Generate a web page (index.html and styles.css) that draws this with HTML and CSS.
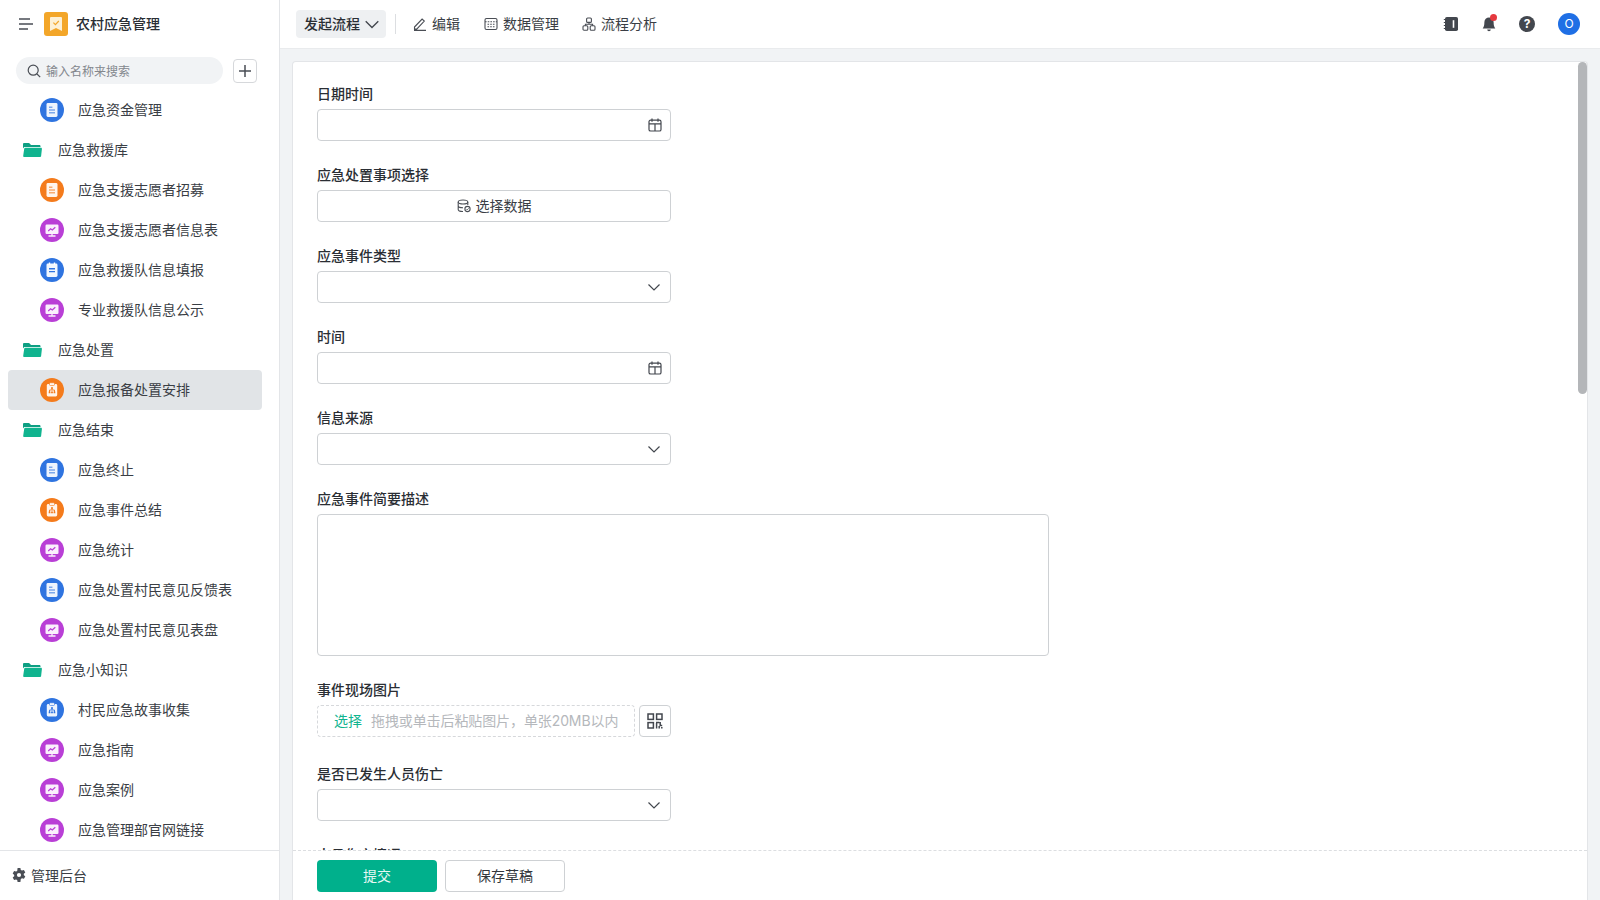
FILE: index.html
```html
<!DOCTYPE html>
<html lang="zh-CN">
<head>
    <meta charset="UTF-8">
    <meta name="viewport" content="width=device-width, initial-scale=1.0">
    <title>应急报备处置安排</title>
    <link rel="stylesheet" href="styles.css">
</head>
<body>
    <!-- Shared icons -->
    <svg class="icon-defs" aria-hidden="true">
        <symbol id="i-doc" viewBox="0 0 24 24">
            <circle cx="12" cy="12" r="12" fill="currentColor"/>
            <rect x="6.5" y="5" width="11" height="14" rx="1.4" fill="#fff" fill-opacity=".92"/>
            <path d="M9 9.2h3.4M9 12h6M9 14.8h6" stroke="currentColor" stroke-opacity=".6" stroke-width="1.4"/>
        </symbol>
        <symbol id="i-clip" viewBox="0 0 24 24">
            <circle cx="12" cy="12" r="12" fill="currentColor"/>
            <rect x="6.5" y="5.5" width="11" height="13.5" rx="1.4" fill="#fff" fill-opacity=".94"/>
            <path d="M9.5 4.5v2.4M14.5 4.5v2.4" stroke="#fff" stroke-width="1.4"/>
            <path d="M9 10.8h6M9 13.6h6" stroke="currentColor" stroke-width="1.4"/>
        </symbol>
        <symbol id="i-screen" viewBox="0 0 24 24">
            <circle cx="12" cy="12" r="12" fill="currentColor"/>
            <rect x="5.5" y="6.5" width="13" height="9.5" rx="1.2" fill="#fff" fill-opacity=".92"/>
            <path d="M8.2 13l2.4-2.2 1.7 1.2 3-2.8" fill="none" stroke="currentColor" stroke-width="1.2"/>
            <path d="M12 16v1.5M8.5 18h7" stroke="#fff" stroke-opacity=".92" stroke-width="1.3"/>
        </symbol>
        <symbol id="i-org" viewBox="0 0 24 24">
            <circle cx="12" cy="12" r="12" fill="currentColor"/>
            <rect x="6.8" y="6" width="10.4" height="12.5" rx="1.4" fill="#fff" fill-opacity=".92"/>
            <rect x="9.5" y="4.8" width="5" height="2.6" rx=".8" fill="#fff" stroke="currentColor" stroke-width=".7"/>
            <path d="M12 10v2M9.5 14v-2h5v2" fill="none" stroke="currentColor" stroke-width=".9"/>
            <path d="M11 9.2h2v1.6h-2zM8.7 13.6h1.7v1.6H8.7zM11.1 13.6h1.8v1.6h-1.8zM13.6 13.6h1.7v1.6h-1.7z" fill="currentColor"/>
        </symbol>
        <symbol id="i-folder" viewBox="0 0 20 16">
            <path d="M1 6.5V2.2C1 1.5 1.5 1 2.2 1h4.5c.4 0 .8.2 1 .5L9 3h8.2c.8 0 1.3.5 1.3 1.2V5H3.4C2 5 1.4 5.6 1 6.5z" fill="#0d9f83"/>
            <path d="M3.4 5.8h15.5c.6 0 1.1.5 1 1.1l-.8 7.3c-.1.5-.5.8-1 .8H2.3c-.7 0-1.2-.6-1.1-1.3l1-6.9c.1-.6.6-1 1.2-1z" fill="#10b48f"/>
        </symbol>
        <symbol id="i-chevron" viewBox="0 0 14 14">
            <path d="M1.5 4.5L7 10L12.5 4.5" fill="none" stroke="currentColor" stroke-width="1.2"/>
        </symbol>
        <symbol id="i-calendar" viewBox="0 0 14 14">
            <rect x="1" y="2.2" width="12" height="10.8" rx="1.6" fill="none" stroke="currentColor" stroke-width="1.2"/>
            <path d="M1 5.8h12M7 5.8V13M4 .6v3.2M10 .6v3.2" fill="none" stroke="currentColor" stroke-width="1.2"/>
        </symbol>
    </svg>

    <div class="app">
        <aside class="sidebar">
            <div class="brand">
                <svg class="brand-menu" width="14" height="12" viewBox="0 0 14 12"><path d="M0 1h11M0 6h14M0 11h9" stroke="#4a4e55" stroke-width="1.5"/></svg>
                <div class="brand-logo">
                    <svg width="12" height="14" viewBox="0 0 12 14"><path d="M0 1a1 1 0 0 1 1-1h10a1 1 0 0 1 1 1v13l-6-3-6 3z" fill="#fdf0d5"/><path d="M3.4 5.6L5.4 7.6L8.8 4" fill="none" stroke="#f3a629" stroke-width="1.2"/></svg>
                </div>
                <span class="brand-name">农村应急管理</span>
            </div>

            <div class="search-row">
                <div class="search-box">
                    <svg width="14" height="14" viewBox="0 0 14 14"><circle cx="6.2" cy="6.2" r="5" fill="none" stroke="#4a4e55" stroke-width="1.2"/><path d="M10 10l3.2 3.2" stroke="#4a4e55" stroke-width="1.2"/></svg>
                    <span>输入名称来搜索</span>
                </div>
                <button class="add-btn">
                    <svg width="14" height="14" viewBox="0 0 14 14"><path d="M7 1v12M1 7h12" stroke="#4a4e55" stroke-width="1.5"/></svg>
                </button>
            </div>

            <nav class="nav-list">
                <a class="nav-row nav-page"><svg class="nav-icon c-blue"><use href="#i-doc"/></svg>应急资金管理</a>
                <a class="nav-row nav-group"><svg class="folder-icon"><use href="#i-folder"/></svg>应急救援库</a>
                <a class="nav-row nav-page"><svg class="nav-icon c-orange"><use href="#i-doc"/></svg>应急支援志愿者招募</a>
                <a class="nav-row nav-page"><svg class="nav-icon c-purple"><use href="#i-screen"/></svg>应急支援志愿者信息表</a>
                <a class="nav-row nav-page"><svg class="nav-icon c-blue"><use href="#i-clip"/></svg>应急救援队信息填报</a>
                <a class="nav-row nav-page"><svg class="nav-icon c-purple"><use href="#i-screen"/></svg>专业救援队信息公示</a>
                <a class="nav-row nav-group"><svg class="folder-icon"><use href="#i-folder"/></svg>应急处置</a>
                <a class="nav-row nav-page active"><svg class="nav-icon c-orange"><use href="#i-org"/></svg>应急报备处置安排</a>
                <a class="nav-row nav-group"><svg class="folder-icon"><use href="#i-folder"/></svg>应急结束</a>
                <a class="nav-row nav-page"><svg class="nav-icon c-blue"><use href="#i-doc"/></svg>应急终止</a>
                <a class="nav-row nav-page"><svg class="nav-icon c-orange"><use href="#i-org"/></svg>应急事件总结</a>
                <a class="nav-row nav-page"><svg class="nav-icon c-purple"><use href="#i-screen"/></svg>应急统计</a>
                <a class="nav-row nav-page"><svg class="nav-icon c-blue"><use href="#i-doc"/></svg>应急处置村民意见反馈表</a>
                <a class="nav-row nav-page"><svg class="nav-icon c-purple"><use href="#i-screen"/></svg>应急处置村民意见表盘</a>
                <a class="nav-row nav-group"><svg class="folder-icon"><use href="#i-folder"/></svg>应急小知识</a>
                <a class="nav-row nav-page"><svg class="nav-icon c-blue"><use href="#i-org"/></svg>村民应急故事收集</a>
                <a class="nav-row nav-page"><svg class="nav-icon c-purple"><use href="#i-screen"/></svg>应急指南</a>
                <a class="nav-row nav-page"><svg class="nav-icon c-purple"><use href="#i-screen"/></svg>应急案例</a>
                <a class="nav-row nav-page"><svg class="nav-icon c-purple"><use href="#i-screen"/></svg>应急管理部官网链接</a>
            </nav>

            <div class="sidebar-foot">
                <svg width="14" height="14" viewBox="0 0 14 14"><path fill-rule="evenodd" d="M5.6 0h2.8l.4 1.9 1.2.7 1.9-.6 1.4 2.4-1.5 1.3v1.4l1.5 1.3-1.4 2.4-1.9-.6-1.2.7L8.4 14H5.6l-.4-1.9-1.2-.7-1.9.6L.7 9.6l1.5-1.3V6.9L.7 5.6 2.100 3l1.900.6 1.200-.7zM7 4.900a2.100 2.100 0 1 0 0 4.200 2.100 2.100 0 0 0 0-4.200z" fill="#4a4e55"/></svg>
                <span>管理后台</span>
            </div>
        </aside>

        <main class="main">
            <header class="topbar">
                <button class="start-btn">发起流程<svg class="chevron start-chevron"><use href="#i-chevron"/></svg></button>
                <span class="top-divider"></span>
                <a class="top-link">
                    <svg width="14" height="14" viewBox="0 0 14 14"><path d="M1.5 10l7.6-8 2.200 2.100-7.600 8H1.500zM1 13.400h12" fill="none" stroke="#4a4e55" stroke-width="1.1"/></svg>编辑
                </a>
                <a class="top-link">
                    <svg width="14" height="14" viewBox="0 0 14 14"><rect x="1" y="1.5" width="12" height="11" rx="1.5" fill="none" stroke="#4a4e55" stroke-width="1.1"/><path d="M1 4.8h12M3.5 7.2h7M3.5 9.8h7" fill="none" stroke="#4a4e55" stroke-width="1.1" stroke-dasharray="1.6 1.1"/></svg>数据管理
                </a>
                <a class="top-link flow-link">
                    <svg width="14" height="14" viewBox="0 0 14 14"><rect x="4.6" y="1" width="4.8" height="4.4" rx="1" fill="none" stroke="#4a4e55" stroke-width="1.1"/><rect x="1" y="8.8" width="4.8" height="4.4" rx="1" fill="none" stroke="#4a4e55" stroke-width="1.1"/><rect x="8.2" y="8.8" width="4.8" height="4.4" rx="1" fill="none" stroke="#4a4e55" stroke-width="1.1"/><path d="M7 5.4v1.800M3.400 8.800V7.200h7.200v1.600" fill="none" stroke="#4a4e55" stroke-width="1.1"/></svg>流程分析
                </a>
                <div class="top-actions">
                    <svg width="16" height="16" viewBox="0 0 16 16"><rect x="2" y="1" width="13" height="14" rx="1.8" fill="#43474e"/><path d="M.8 3.500h2.200M.8 6.500h2.200M.8 9.500h2.200M.8 12.500h2.200" stroke="#43474e" stroke-width="1.2"/><path d="M10.500 4.200v7.600" stroke="#fff" stroke-width="1.6"/></svg>
                    <span class="bell">
                        <svg width="16" height="16" viewBox="0 0 16 16"><path d="M8 1.500a4.600 4.600 0 0 1 4.600 4.600c0 3.600.6 5 1.700 6.400H1.700c1.100-1.400 1.700-2.800 1.700-6.400A4.600 4.600 0 0 1 8 1.500zM6.200 13.500h3.600a1.800 1.800 0 0 1-3.600 0z" fill="#43474e"/></svg>
                        <i class="bell-dot"></i>
                    </span>
                    <span class="help">?</span>
                    <span class="avatar">O</span>
                </div>
            </header>

            <section class="card">
                <div class="form-body">
                    <div class="field">
                        <label>日期时间</label>
                        <div class="input"><svg class="cal"><use href="#i-calendar"/></svg></div>
                    </div>
                    <div class="field">
                        <label>应急处置事项选择</label>
                        <button class="input pick-btn">
                            <svg width="14" height="14" viewBox="0 0 14 14"><ellipse cx="6" cy="3" rx="4.8" ry="2" fill="none" stroke="#4a4e55" stroke-width="1.1"/><path d="M1.2 3v7.500c0 1.100 2.100 2 4.800 2M1.200 6.800c0 1.100 2.100 2 4.800 2M10.800 3v3" fill="none" stroke="#4a4e55" stroke-width="1.1"/><circle cx="10.5" cy="10" r="2.6" fill="none" stroke="#4a4e55" stroke-width="1.1"/><path d="M9.400 10l.8.8 1.400-1.400" fill="none" stroke="#4a4e55" stroke-width=".9"/></svg>
                            选择数据
                        </button>
                    </div>
                    <div class="field">
                        <label>应急事件类型</label>
                        <div class="input"><svg class="chevron"><use href="#i-chevron"/></svg></div>
                    </div>
                    <div class="field">
                        <label>时间</label>
                        <div class="input"><svg class="cal"><use href="#i-calendar"/></svg></div>
                    </div>
                    <div class="field">
                        <label>信息来源</label>
                        <div class="input"><svg class="chevron"><use href="#i-chevron"/></svg></div>
                    </div>
                    <div class="field">
                        <label>应急事件简要描述</label>
                        <div class="textarea"></div>
                    </div>
                    <div class="field field-upload">
                        <label>事件现场图片</label>
                        <div class="upload-row">
                            <div class="upload-box"><span class="upload-pick">选择</span><span class="upload-hint">拖拽或单击后粘贴图片，单张20MB以内</span></div>
                            <button class="qr-btn">
                                <svg width="16" height="16" viewBox="0 0 16 16" fill="none" stroke="#43474e" stroke-width="1.5"><rect x="1" y="1" width="5.4" height="5.4"/><rect x="9.6" y="1" width="5.4" height="5.4"/><rect x="1" y="9.6" width="5.4" height="5.4"/><path d="M9 9.600h3.400M13.200 9v3.400h2M9.600 10v5.400M12.200 13v2.400M14.800 14v1.400"/></svg>
                            </button>
                        </div>
                    </div>
                    <div class="field">
                        <label>是否已发生人员伤亡</label>
                        <div class="input"><svg class="chevron"><use href="#i-chevron"/></svg></div>
                    </div>
                    <div class="field">
                        <label>人员伤亡情况</label>
                        <div class="input"></div>
                    </div>
                </div>
                <div class="form-foot">
                    <button class="submit-btn">提交</button>
                    <button class="draft-btn">保存草稿</button>
                </div>
                <div class="scroll-thumb"></div>
            </section>
        </main>
    </div>
</body>
</html>
```

FILE: styles.css
```css
* {
    box-sizing: border-box;
}
html, body {
    height: 100%;
}
body {
    margin: 0;
    overflow: hidden;
    font-family: Inter, "Noto Sans CJK SC", sans-serif;
    font-size: 14px;
    color: #33373d;
    background-color: #fff;
}
button {
    font: inherit;
    color: inherit;
    cursor: pointer;
}
.icon-defs {
    position: absolute;
    width: 0;
    height: 0;
}
.app {
    display: flex;
    height: 900px;
}

/* Sidebar */
.sidebar {
    width: 280px;
    flex-shrink: 0;
    display: flex;
    flex-direction: column;
    border-right: 1px solid #e3e5e8;
}
.brand {
    height: 48px;
    display: flex;
    align-items: center;
    padding-left: 19px;
}
.brand-menu {
    margin-right: 11px;
}
.brand-logo {
    width: 24px;
    height: 24px;
    border-radius: 3px;
    background-color: #f3a629;
    display: flex;
    align-items: center;
    justify-content: center;
    margin-right: 8px;
}
.brand-name {
    font-weight: 500;
    color: #2a2e34;
    padding-bottom: 2px;
}
.search-row {
    display: flex;
    align-items: center;
    padding: 3px 0 0 16px;
    height: 42px;
}
.search-box {
    width: 207px;
    height: 27px;
    border-radius: 14px;
    background-color: #f1f3f5;
    display: flex;
    align-items: center;
    gap: 5px;
    padding-left: 11px;
    font-size: 12px;
    color: #83878d;
}
.add-btn {
    width: 24px;
    height: 24px;
    margin-left: 10px;
    padding: 0;
    display: flex;
    align-items: center;
    justify-content: center;
    background-color: #fff;
    border: 1px solid #d6d8db;
    border-radius: 4px;
}
.nav-list {
    flex: 1;
    overflow: hidden;
}
.nav-row {
    height: 40px;
    margin: 0 17px 0 8px;
    padding-bottom: 2px;
    display: flex;
    align-items: center;
    border-radius: 4px;
    color: #3a3e45;
}
.nav-page {
    padding-left: 32px;
}
.nav-group {
    padding-left: 14px;
}
.nav-row.active {
    background-color: #e1e4e7;
}
.nav-icon {
    width: 24px;
    height: 24px;
    margin: 2px 14px 0 0;
}
.folder-icon {
    width: 20px;
    height: 16px;
    margin: 2px 16px 0 0;
}
.c-blue {
    color: #2f74e0;
}
.c-orange {
    color: #f47b1c;
}
.c-purple {
    color: #b93fd6;
}
.sidebar-foot {
    height: 50px;
    border-top: 1px solid #e3e5e8;
    display: flex;
    align-items: center;
    gap: 5px;
    padding: 0 0 1px 12px;
    color: #3a3e45;
}

/* Main area */
.main {
    flex: 1;
    display: flex;
    flex-direction: column;
    background-color: #f1f3f5;
    min-width: 0;
}
.topbar {
    height: 49px;
    flex-shrink: 0;
    background-color: #fff;
    border-bottom: 1px solid #e9ebed;
    display: flex;
    align-items: center;
    padding: 0 20px 1px 16px;
}
.start-btn {
    height: 28px;
    width: 90px;
    border: none;
    border-radius: 4px;
    background-color: #eef0f2;
    display: flex;
    align-items: center;
    gap: 4px;
    padding: 0 0 2px 8px;
    font-weight: 500;
    color: #2a2e34;
}
.chevron {
    width: 14px;
    height: 14px;
    color: #43474e;
}
.start-chevron {
    width: 16px;
    height: 16px;
    margin-top: 2px;
}
.top-divider {
    width: 1px;
    height: 20px;
    background-color: #dcdee1;
    margin: 0 17px 0 9px;
}
.top-link {
    display: flex;
    align-items: center;
    gap: 5px;
    margin-right: 24px;
    padding-bottom: 2px;
    color: #3a3e45;
}
.top-link svg {
    margin-top: 2px;
}
.flow-link {
    margin-left: -1px;
}
.top-actions {
    margin-left: auto;
    display: flex;
    align-items: center;
    gap: 22px;
}
.bell {
    position: relative;
    display: flex;
}
.bell-dot {
    position: absolute;
    top: -2px;
    right: 0;
    width: 7px;
    height: 7px;
    border-radius: 50%;
    background-color: #e5393f;
}
.help {
    width: 16px;
    height: 16px;
    border-radius: 50%;
    background-color: #43474e;
    color: #fff;
    font-size: 12px;
    font-weight: 700;
    line-height: 16px;
    text-align: center;
}
.avatar {
    width: 22px;
    height: 22px;
    margin-left: 1px;
    border-radius: 50%;
    background-color: #1f6fe5;
    color: #fff;
    font-size: 12px;
    line-height: 22px;
    text-align: center;
}

/* Form card */
.card {
    position: relative;
    flex: 1;
    min-height: 0;
    margin: 12px 12px 0;
    display: flex;
    flex-direction: column;
    background-color: #fff;
    border: 1px solid #e3e5e8;
    border-bottom: none;
    border-radius: 4px 4px 0 0;
}
.form-body {
    flex: 1;
    min-height: 0;
    overflow: hidden;
    padding: 21px 23px 0 24px;
}
.field {
    margin-bottom: 23px;
}
.field-upload {
    margin-bottom: 26px;
}
.field label {
    display: block;
    height: 22px;
    line-height: 22px;
    margin-bottom: 4px;
    font-weight: 500;
    color: #2a2e34;
}
.input {
    width: 354px;
    height: 32px;
    display: flex;
    align-items: center;
    justify-content: flex-end;
    padding-right: 9px;
    background-color: #fff;
    border: 1px solid #ced1d4;
    border-radius: 4px;
}
.cal {
    width: 14px;
    height: 14px;
    margin-right: -1px;
    color: #43474e;
}
.pick-btn {
    justify-content: center;
    gap: 5px;
    padding: 0 0 2px;
    color: #3a3e45;
}
.pick-btn svg {
    margin-top: 2px;
}
.textarea {
    width: 732px;
    height: 142px;
    border: 1px solid #ced1d4;
    border-radius: 4px;
}
.upload-row {
    display: flex;
    gap: 4px;
}
.upload-box {
    width: 318px;
    height: 32px;
    display: flex;
    align-items: center;
    gap: 9px;
    padding: 0 0 2px 16px;
    border: 1px dashed #d6d8db;
    border-radius: 4px;
    white-space: nowrap;
}
.upload-pick {
    color: #10b48f;
}
.upload-hint {
    color: #b5b8bc;
    letter-spacing: -.1px;
}
.qr-btn {
    width: 32px;
    height: 32px;
    padding: 0;
    display: flex;
    align-items: center;
    justify-content: center;
    background-color: #fff;
    border: 1px solid #ced1d4;
    border-radius: 4px;
}
.form-foot {
    height: 50px;
    flex-shrink: 0;
    display: flex;
    gap: 8px;
    padding: 9px 23px 0 24px;
    background-color: #fff;
    border-top: 1px dashed #dcdee1;
}
.submit-btn {
    width: 120px;
    height: 32px;
    padding: 0 0 2px;
    border: none;
    border-radius: 4px;
    background-color: #00b08c;
    color: #e6f8f3;
}
.draft-btn {
    width: 120px;
    height: 32px;
    padding: 0 0 2px;
    background-color: #fff;
    border: 1px solid #ced1d4;
    border-radius: 4px;
}
.scroll-thumb {
    position: absolute;
    top: 0;
    right: 0;
    width: 9px;
    height: 332px;
    border-radius: 5px;
    background-color: #b4b6b9;
}
```
